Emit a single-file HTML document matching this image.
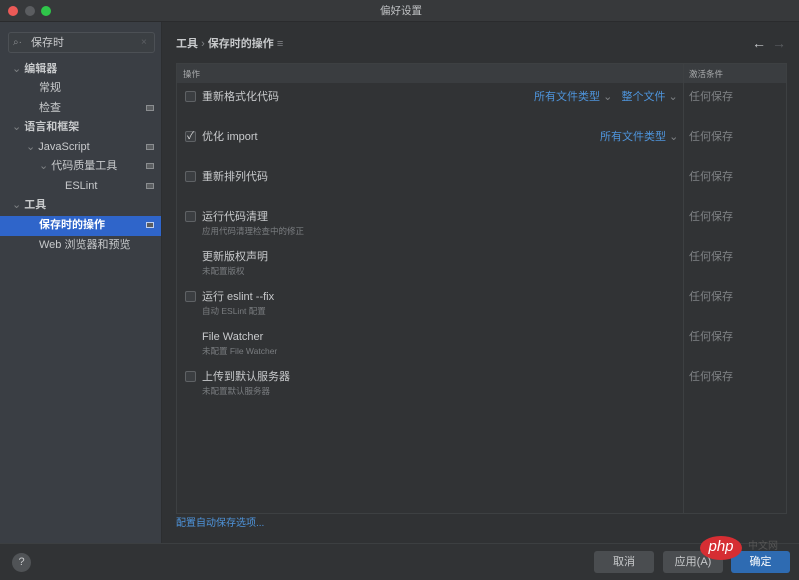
<!DOCTYPE html><html><head><meta charset="utf-8"><style>
*{margin:0;padding:0;box-sizing:border-box}
body{width:799px;height:580px;background:#303234;font-family:"Liberation Sans","Noto Sans CJK SC",sans-serif;color:#c8cacc;font-size:11px;position:relative;overflow:hidden}
.a{position:absolute;white-space:nowrap;line-height:14px}
.title{left:0;top:0;width:799px;height:22px;background:#37393b;border-bottom:1px solid #2a2b2d}
.dot{width:10px;height:10px;border-radius:50%;top:6px}
.side{left:0;top:22px;width:162px;height:521px;background:#3a3e44;border-right:1px solid #2c2e30}
.search{left:8px;top:32px;width:147px;height:21px;border:1px solid #4c5055;background:#3b3f43;border-radius:3px}
.a.ti{height:20px;line-height:20px;font-size:11px;color:#c8cacc}
.ic{width:8px;height:6px;border:1px solid #8a8d90;background:#5a5d60}
.tbl{left:176px;top:63px;width:611px;height:451px;border:1px solid #3d4042;background:#313335}
.hd{left:177px;top:64px;width:609px;height:19px;background:#3a3d40}
.cb{width:11px;height:11px;border:1px solid #5f6265;border-radius:2px;background:#3b3e41}
.g{color:#7f8285}
.s{font-size:8.5px;color:#7a7d80}
.bl{color:#4e94db}
.foot{left:0;top:543px;width:799px;height:37px;background:#313335;border-top:1px solid #3c3f41}
.btn{top:551px;height:22px;border-radius:3px;background:#4a4d50;color:#c8cacc;text-align:center;font-size:11px}
</style></head><body>
<div class="a title"></div>
<div class="a dot" style="left:8px;background:#ec5a57"></div>
<div class="a dot" style="left:25px;background:#5b5d60"></div>
<div class="a dot" style="left:41px;background:#2fc64a"></div>
<div class="a" style="left:380px;top:4px;font-size:10.5px;color:#bfc1c3">偏好设置</div>
<div class="a side"></div>
<div class="a search"></div>
<div class="a" style="left:13px;top:36px;font-size:10px;color:#8a8d90">⌕·</div>
<div class="a" style="left:31px;top:36px;font-size:11px">保存时</div>
<div class="a" style="left:141px;top:36px;color:#5d6064;font-size:10px">×</div>
<div class="a ti" style="left:12px;top:59px"><span class="g">⌄</span> <b>编辑器</b></div>
<div class="a ti" style="left:39px;top:78px">常规</div>
<div class="a ti" style="left:39px;top:98px">检查</div><div class="a ic" style="left:146px;top:105px"></div>
<div class="a ti" style="left:12px;top:117px"><span class="g">⌄</span> <b>语言和框架</b></div>
<div class="a ti" style="left:26px;top:137px"><span class="g">⌄</span> JavaScript</div><div class="a ic" style="left:146px;top:144px"></div>
<div class="a ti" style="left:39px;top:156px"><span class="g">⌄</span> 代码质量工具</div><div class="a ic" style="left:146px;top:163px"></div>
<div class="a ti" style="left:65px;top:176px">ESLint</div><div class="a ic" style="left:146px;top:183px"></div>
<div class="a ti" style="left:12px;top:195px"><span class="g">⌄</span> <b>工具</b></div>
<div class="a" style="left:0;top:216px;width:161px;height:20px;background:#2f65ca"></div>
<div class="a ti" style="left:39px;top:215px;color:#fff;font-weight:bold">保存时的操作</div><div class="a ic" style="left:146px;top:222px;border-color:#c0d0f0"></div>
<div class="a ti" style="left:39px;top:235px">Web 浏览器和预览</div>
<div class="a" style="left:176px;top:37px;font-size:11px;font-weight:bold">工具 <span class="g" style="font-weight:normal">›</span> 保存时的操作 <span class="g" style="font-weight:normal">≡</span></div>
<div class="a" style="left:752px;top:36px;font-size:14px;color:#c8cacc">←</div>
<div class="a" style="left:772px;top:36px;font-size:14px;color:#5a5d60">→</div>
<div class="a tbl"></div><div class="a hd"></div>
<div class="a" style="left:683px;top:64px;width:1px;height:449px;background:#3d4042"></div>
<div class="a" style="left:183px;top:67px;font-size:8.5px;color:#a8aaac">操作</div>
<div class="a" style="left:689px;top:67px;font-size:8.5px;color:#a8aaac">激活条件</div>

<div class="a cb" style="left:185px;top:91px"></div><div class="a" style="left:202px;top:90px">重新格式化代码</div>
<div class="a bl" style="left:534px;top:90px">所有文件类型 <span class="g">⌄</span>&nbsp;&nbsp; 整个文件 <span class="g">⌄</span></div>
<div class="a cb" style="left:185px;top:131px;color:#ddd;font-size:10px;line-height:9px;text-align:center">✓</div><div class="a" style="left:202px;top:130px">优化 import</div>
<div class="a bl" style="left:600px;top:130px">所有文件类型 <span class="g">⌄</span></div>
<div class="a cb" style="left:185px;top:171px"></div><div class="a" style="left:202px;top:170px">重新排列代码</div>
<div class="a cb" style="left:185px;top:211px"></div><div class="a" style="left:202px;top:210px">运行代码清理</div><div class="a s" style="left:202px;top:224px">应用代码清理检查中的修正</div>
<div class="a" style="left:202px;top:250px">更新版权声明</div><div class="a s" style="left:202px;top:264px">未配置版权</div>
<div class="a cb" style="left:185px;top:291px"></div><div class="a" style="left:202px;top:290px">运行 eslint --fix</div><div class="a s" style="left:202px;top:304px">自动 ESLint 配置</div>
<div class="a" style="left:202px;top:330px">File Watcher</div><div class="a s" style="left:202px;top:344px">未配置 File Watcher</div>
<div class="a cb" style="left:185px;top:371px"></div><div class="a" style="left:202px;top:370px">上传到默认服务器</div><div class="a s" style="left:202px;top:384px">未配置默认服务器</div>
<div class="a g" style="left:689px;top:90px">任何保存</div>
<div class="a g" style="left:689px;top:130px">任何保存</div>
<div class="a g" style="left:689px;top:170px">任何保存</div>
<div class="a g" style="left:689px;top:210px">任何保存</div>
<div class="a g" style="left:689px;top:250px">任何保存</div>
<div class="a g" style="left:689px;top:290px">任何保存</div>
<div class="a g" style="left:689px;top:330px">任何保存</div>
<div class="a g" style="left:689px;top:370px">任何保存</div>
<div class="a bl" style="left:176px;top:517px;font-size:10px">配置自动保存选项...</div>
<div class="a foot"></div>
<div class="a" style="left:12px;top:553px;width:19px;height:19px;border-radius:50%;background:#505356;color:#c8cacc;text-align:center;line-height:19px;font-size:11px">?</div>
<div class="a btn" style="left:594px;width:60px;line-height:22px">取消</div>
<div class="a btn" style="left:663px;width:60px;line-height:22px">应用(A)</div>
<div class="a btn" style="left:731px;width:59px;background:#2e6bb2;color:#fff;line-height:22px">确定</div>
<div class="a" style="left:700px;top:536px;width:42px;height:24px;border-radius:50%;background:#d62e33;color:#fff;font-style:italic;font-size:15px;text-align:center;line-height:22px">php</div>
<div class="a" style="left:748px;top:540px;color:#555;font-size:10px">中文网</div>
</body></html>
